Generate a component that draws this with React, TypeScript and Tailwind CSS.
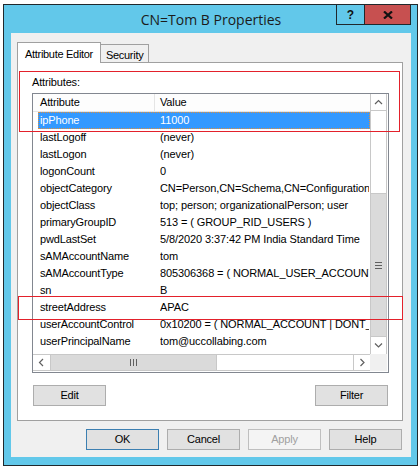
const rows: { name: string; value: string }[] = [
  { name: "ipPhone", value: "11000" },
  { name: "lastLogoff", value: "(never)" },
  { name: "lastLogon", value: "(never)" },
  { name: "logonCount", value: "0" },
  { name: "objectCategory", value: "CN=Person,CN=Schema,CN=Configuration,DC=uccollabing,DC=com" },
  { name: "objectClass", value: "top; person; organizationalPerson; user" },
  { name: "primaryGroupID", value: "513 = ( GROUP_RID_USERS )" },
  { name: "pwdLastSet", value: "5/8/2020 3:37:42 PM India Standard Time" },
  { name: "sAMAccountName", value: "tom" },
  { name: "sAMAccountType", value: "805306368 = ( NORMAL_USER_ACCOUNT )" },
  { name: "sn", value: "B" },
  { name: "streetAddress", value: "APAC" },
  { name: "userAccountControl", value: "0x10200 = ( NORMAL_ACCOUNT | DONT_EXPIRE_PASSWD )" },
  { name: "userPrincipalName", value: "tom@uccollabing.com" },
];

const Chevron = ({ dir }: { dir: "up" | "down" | "left" | "right" }) => {
  const pts = {
    up: "1,5 4.5,1.5 8,5",
    down: "1,1.5 4.5,5 8,1.5",
    left: "5,1 1.5,4.5 5,8",
    right: "1.5,1 5,4.5 1.5,8",
  }[dir];
  const vertical = dir === "up" || dir === "down";
  return (
    <svg width={vertical ? 9 : 7} height={vertical ? 7 : 9} viewBox={vertical ? "0 0 9 7" : "0 0 7 9"}>
      <polyline points={pts} fill="none" stroke="#606060" strokeWidth="1.2" />
    </svg>
  );
};

const Btn = ({ label, primary, disabled }: { label: string; primary?: boolean; disabled?: boolean }) => (
  <div
    className={`w-[73px] h-[21px] flex items-center justify-center border text-[11px] tracking-[-0.2px] ${
      disabled
        ? "bg-[#f4f4f4] border-[#bfbfbf] text-[#a0a0a0]"
        : primary
        ? "bg-[#e1e1e1] border-[#3c7fb1] text-black"
        : "bg-[#e1e1e1] border-[#adadad] text-black"
    }`}
  >
    {label}
  </div>
);

export default function App() {
  return (
    <div className="relative w-[420px] h-[470px] bg-white pt-[4px] pl-[3px] overflow-hidden font-['Liberation_Sans',Arial,sans-serif]">
      <div className="w-[415px] h-[462px] border border-[#20282c] bg-[#62c8ea] flex flex-col">
        {/* title bar */}
        <div className="h-[28px] flex pl-[7px] pr-[6px]">
          <div className="w-[75px]" />
          <div className="flex-1 flex items-center justify-center font-['Open_Sans',sans-serif] text-[14px] text-[#1b1b1b]">
            CN=Tom B Properties
          </div>
          <div className="w-[75px] h-[21px] -mt-px flex">
            <div className="w-[29px] h-full border border-[#20282c] flex items-center justify-center font-bold text-[12px] text-[#111]">
              ?
            </div>
            <div className="w-[47px] -ml-px h-full border border-[#20282c] bg-[#c75050] flex items-center justify-center">
              <svg width="10" height="8" viewBox="0 0 10 8">
                <path d="M1 0.5 L9 7.5 M9 0.5 L1 7.5" stroke="#111" strokeWidth="2.2" />
              </svg>
            </div>
          </div>
        </div>

        {/* client area */}
        <div className="ml-[7px] mr-[6px] h-[424px] bg-[#f0f0f0] flex flex-col text-[11px] tracking-[-0.15px] text-black">
          {/* tabs */}
          <div className="mt-[9px] ml-[6px] h-[20px] flex items-end">
            <div className="relative z-10 -mb-px w-[84px] h-[21px] bg-white border-t border-l border-r border-[#a0a0a0] pl-[7px] pt-[3px] tracking-[-0.3px]">
              Attribute Editor
            </div>
            <div className="w-[48px] h-[18px] bg-[#f0f0f0] border-t border-r border-[#a0a0a0] pl-[5px] pt-[2px] tracking-[-0.3px]">
              Security
            </div>
          </div>

          {/* tab panel */}
          <div className="ml-[6px] mr-[8px] h-[359px] border border-[#a0a0a0] bg-white flex flex-col">
            <div className="pl-[14px] mt-[13px] leading-[13px]">Attributes:</div>
            <div className="ml-[14px] mt-[4px] w-[357px] h-[280px] border border-[#828790] flex flex-col">
              <div className="h-[260px] flex">
                {/* list */}
                <div className="w-[337px] flex flex-col overflow-hidden">
                  <div className="h-[18px] flex border-b border-[#e5e5e5] bg-[#fdfdfd] leading-[17px]">
                    <div className="w-[122px] pl-[7px] border-r border-[#e5e5e5]">Attribute</div>
                    <div className="pl-[5px]">Value</div>
                  </div>
                  <div className="h-[242px] overflow-hidden">
                    {rows.map((r, i) => (
                      <div key={r.name} className="pl-[5px]">
                        <div
                          className={`h-[17px] flex leading-[15px] border ${
                            i === 0 ? "bg-[#3399ff] border-dotted border-[#e0903c] text-white" : "border-transparent"
                          }`}
                        >
                          <div className="w-[121px] shrink-0 pl-px">{r.name}</div>
                          <div className="flex-1 whitespace-nowrap overflow-hidden tracking-[-0.1px]">{r.value}</div>
                        </div>
                      </div>
                    ))}
                  </div>
                </div>
                {/* vertical scrollbar */}
                <div className="w-[17px] flex flex-col border-x border-[#c8c8c8] bg-white">
                  <div className="h-[17px] border-b border-[#c8c8c8] flex items-center justify-center">
                    <Chevron dir="up" />
                  </div>
                  <div className="h-[82px]" />
                  <div className="h-[144px] bg-[#dadada] border-y border-[#c8c8c8] flex flex-col items-center justify-center gap-[2px]">
                    <div className="w-[7px] h-px bg-[#606060]" />
                    <div className="w-[7px] h-px bg-[#606060]" />
                    <div className="w-[7px] h-px bg-[#606060]" />
                  </div>
                  <div className="h-[17px] flex items-center justify-center">
                    <Chevron dir="down" />
                  </div>
                </div>
                <div className="w-px" />
              </div>
              <div className="h-[17px] flex">
                {/* horizontal scrollbar */}
                <div className="w-[337px] flex border-y border-[#c8c8c8] bg-white">
                  <div className="w-[18px] border-r border-[#c8c8c8] flex items-center justify-center">
                    <Chevron dir="left" />
                  </div>
                  <div className="w-[166px] bg-[#dadada] border-r border-[#c8c8c8] flex items-center justify-center gap-[2px]">
                    <div className="w-px h-[7px] bg-[#606060]" />
                    <div className="w-px h-[7px] bg-[#606060]" />
                    <div className="w-px h-[7px] bg-[#606060]" />
                  </div>
                  <div className="flex-1" />
                  <div className="w-[17px] border-l border-[#c8c8c8] flex items-center justify-center">
                    <Chevron dir="right" />
                  </div>
                </div>
                <div className="w-[17px] bg-[#f0f0f0]" />
              </div>
            </div>
            <div className="mt-[12px] pl-[15px] pr-[14px] flex justify-between">
              <Btn label="Edit" />
              <Btn label="Filter" />
            </div>
          </div>

          {/* dialog buttons */}
          <div className="mt-[8px] pr-[9px] flex justify-end gap-[8px]">
            <Btn label="OK" primary />
            <Btn label="Cancel" />
            <Btn label="Apply" disabled />
            <Btn label="Help" />
          </div>
        </div>
      </div>

      {/* annotation boxes */}
      <div className="absolute z-20 left-[19px] top-[71px] w-[381px] h-[61px] border border-[#e3212b]" />
      <div className="absolute z-20 left-[18px] top-[296px] w-[385px] h-[24px] border border-[#e3212b]" />
    </div>
  );
}
